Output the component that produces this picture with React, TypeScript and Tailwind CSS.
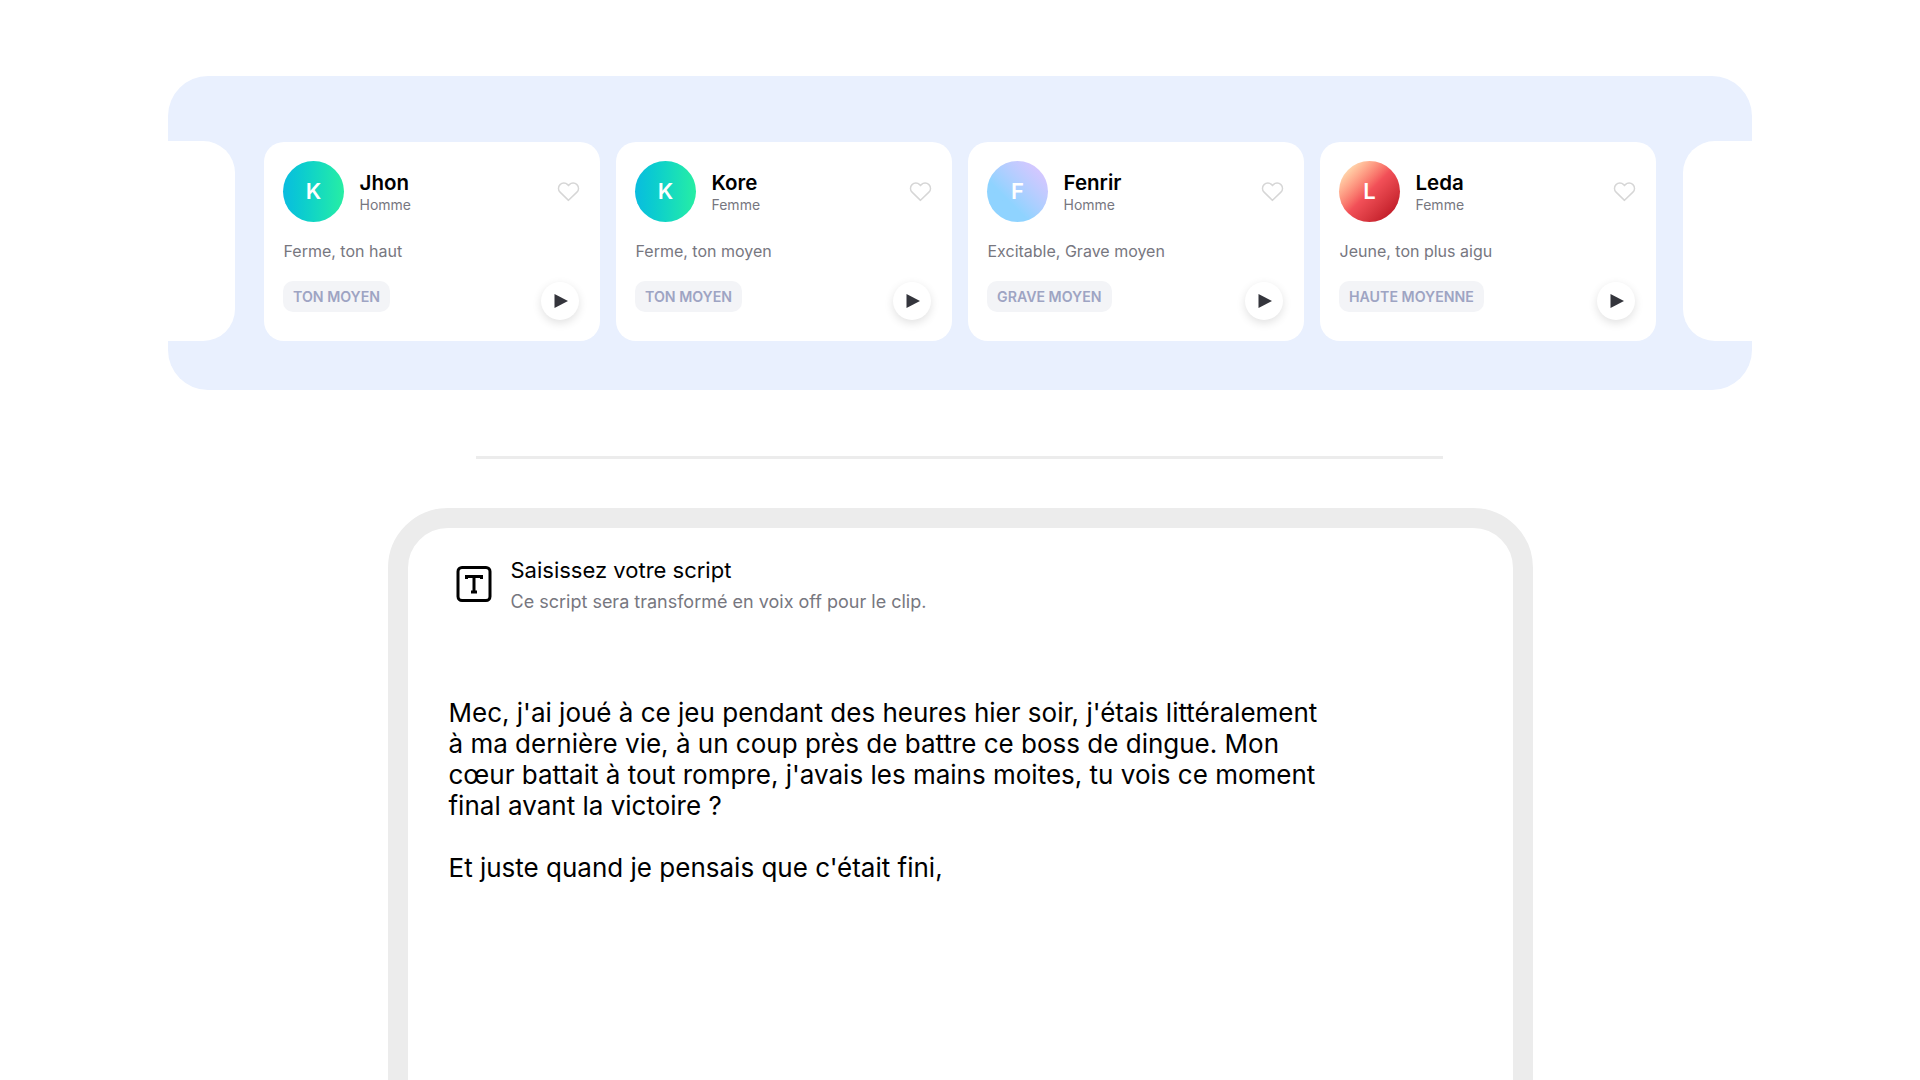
import React from "react";

const voices = [
  {
    letter: "K",
    name: "Jhon",
    gender: "Homme",
    description: "Ferme, ton haut",
    tag: "TON MOYEN",
    avatar: "bg-gradient-to-r from-[#0bbcdf] to-[#27eea3]",
  },
  {
    letter: "K",
    name: "Kore",
    gender: "Femme",
    description: "Ferme, ton moyen",
    tag: "TON MOYEN",
    avatar: "bg-gradient-to-r from-[#0bbcdf] to-[#27eea3]",
  },
  {
    letter: "F",
    name: "Fenrir",
    gender: "Homme",
    description: "Excitable, Grave moyen",
    tag: "GRAVE MOYEN",
    avatar: "bg-gradient-to-tr from-[#8fd3ff] from-35% to-[#d3c7ff] to-85%",
  },
  {
    letter: "L",
    name: "Leda",
    gender: "Femme",
    description: "Jeune, ton plus aigu",
    tag: "HAUTE MOYENNE",
    avatar: "bg-gradient-to-br from-[#ffdcb0] from-12% via-[#f25058] via-50% to-[#c5202c] to-85%",
  },
];

function VoiceCard({ voice }: { voice: (typeof voices)[number] }) {
  return (
    <div className="relative flex h-[199px] w-[336px] shrink-0 flex-col rounded-[20px] bg-white px-[19px] pt-[19px]">
      <div className="flex items-center">
        <div
          className={`flex h-[61px] w-[61px] shrink-0 items-center justify-center rounded-full text-[22px] font-semibold text-white ${voice.avatar}`}
        >
          {voice.letter}
        </div>
        <div className="mt-[1px] ml-[15.5px] flex flex-col">
          <span className="text-[20.5px] leading-[26px] font-semibold text-black">{voice.name}</span>
          <span className="text-[14px] leading-[18px] text-[#77777f]">{voice.gender}</span>
        </div>
        <svg
          viewBox="0 0 24 24"
          className="ml-auto h-[25px] w-[25px]"
          fill="none"
          stroke="#d6d6d6"
          strokeWidth="1.4"
        >
          <path d="M12 20.5 3.9 12.6a5 5 0 0 1 0-7.2 5.2 5.2 0 0 1 7.3 0l.8.8.8-.8a5.2 5.2 0 0 1 7.3 0 5 5 0 0 1 0 7.2L12 20.5Z" />
        </svg>
      </div>
      <p className="mt-[18px] ml-[0.5px] text-[16px] leading-[22px] text-[#77777f]">{voice.description}</p>
      <div className="mt-[19px] self-start rounded-[10px] bg-[#f3f4f7] px-[10px] text-[14.2px] leading-[31px] font-semibold text-[#9ea4c3]">
        {voice.tag}
      </div>
      <button
        type="button"
        className="absolute right-[21px] bottom-[21px] flex h-[38px] w-[38px] items-center justify-center rounded-full bg-white shadow-[0_3px_10px_rgba(0,0,0,0.12)]"
      >
        <svg viewBox="0 0 14 14" className="ml-[1px] h-[14px] w-[14px]" fill="#34353c">
          <path d="M0.5 0 14 7 0.5 14Z" />
        </svg>
      </button>
    </div>
  );
}

export default function App() {
  return (
    <div className="flex h-[1080px] flex-col items-center overflow-hidden bg-white pt-[76px] font-['Inter',sans-serif]">
      <div className="flex h-[314px] w-[1584px] shrink-0 items-start overflow-hidden rounded-[40px] bg-[#e9f0fe] pt-[65px]">
        <div className="h-[200px] w-[67px] shrink-0 rounded-r-[32px] bg-white" />
        <div className="mx-[29px] mt-[1px] flex gap-[16px]">
          {voices.map((voice) => (
            <VoiceCard key={voice.name} voice={voice} />
          ))}
        </div>
        <div className="-ml-[2px] h-[200px] w-[69px] shrink-0 rounded-l-[32px] bg-white" />
      </div>

      <div className="mt-[66px] mr-[1px] h-[3px] w-[967px] shrink-0 bg-[#ececec]" />

      <div className="mt-[49px] h-[700px] w-[1145px] shrink-0 rounded-[60px] border-[20px] border-[#ececec] bg-white px-[41px] pt-[27px]">
        <div className="flex items-start">
          <svg viewBox="0 0 36 36" className="mt-[11px] ml-[7px] h-[36px] w-[36px]" fill="none" stroke="#000" strokeWidth="3">
            <rect x="2" y="1.5" width="32" height="33" rx="4" />
            <path d="M10.5 13v-2.5h15V13M18 10.5V26M15 26h6" strokeWidth="3" />
          </svg>
          <div className="ml-[19px] flex flex-col">
            <span className="text-[22px] leading-[30px] text-black">Saisissez votre script</span>
            <span className="mt-[4px] text-[18px] leading-[26px] text-[#77777f]">
              Ce script sera transformé en voix off pour le clip.
            </span>
          </div>
        </div>
        <div className="mt-[82px] w-[880px] text-[26px] leading-[31px] text-black">
          <p>
            Mec, j'ai joué à ce jeu pendant des heures hier soir, j'étais littéralement à ma dernière vie, à un coup
            près de battre ce boss de dingue. Mon cœur battait à tout rompre, j'avais les mains moites, tu vois ce
            moment final avant la victoire ?
          </p>
          <p className="mt-[31px]">Et juste quand je pensais que c'était fini,</p>
        </div>
      </div>
    </div>
  );
}
